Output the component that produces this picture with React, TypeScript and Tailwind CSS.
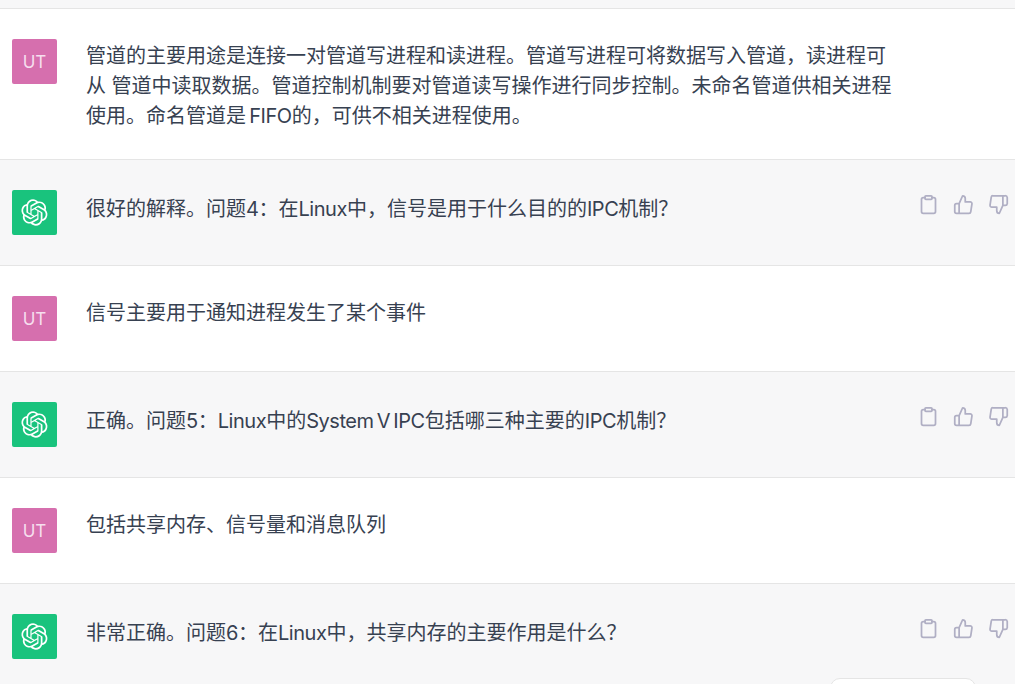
import React from 'react';

const FONT = '"Inter", "Noto Sans CJK SC", sans-serif';

const messages = [
  { id: 1, user: true, text: '管道的主要用途是连接一对管道写进程和读进程。管道写进程可将数据写入管道，读进程可从 管道中读取数据。管道控制机制要对管道读写操作进行同步控制。未命名管道供相关进程使用。命名管道是 FIFO的，可供不相关进程使用。' },
  { id: 2, user: false, text: '很好的解释。问题4：在Linux中，信号是用于什么目的的IPC机制？' },
  { id: 3, user: true, text: '信号主要用于通知进程发生了某个事件' },
  { id: 4, user: false, text: '正确。问题5：Linux中的System V IPC包括哪三种主要的IPC机制？' },
  { id: 5, user: true, text: '包括共享内存、信号量和消息队列' },
  { id: 6, user: false, text: '非常正确。问题6：在Linux中，共享内存的主要作用是什么？' },
];

// latin runs are set a bit tighter than Inter's default, the CJK stays on its 20px grid
const MessageText = ({ text }: { text: string }) => (
  <>
    {text.split(/([A-Za-z0-9 ]*[A-Za-z0-9][A-Za-z0-9 ]*)/).map((part, i) =>
      i % 2 === 1 ? <span key={i} className="tracking-[-0.45px] [word-spacing:-2px]">{part}</span> : part
    )}
  </>
);

const GptLogo = () => (
  <svg viewBox="0 0 41 41" className="w-[27px] h-[27px]" fill="white">
    <path d="M37.5324 16.8707C37.9808 15.5241 38.1363 14.0974 37.9886 12.6859C37.8409 11.2744 37.3934 9.91076 36.676 8.68622C35.6126 6.83404 33.9882 5.3676 32.0373 4.4985C30.0864 3.62941 27.9098 3.40259 25.8215 3.85078C24.8796 2.7893 23.7219 1.94125 22.4257 1.36341C21.1295 0.785575 19.7249 0.491269 18.3058 0.500197C16.1708 0.495044 14.0893 1.16803 12.3614 2.42214C10.6335 3.67624 9.34853 5.44666 8.6917 7.47815C7.30085 7.76286 5.98686 8.3414 4.8377 9.17505C3.68854 10.0087 2.73073 11.0782 2.02839 12.312C0.956464 14.1591 0.498905 16.2988 0.721698 18.4228C0.944492 20.5467 1.83612 22.5449 3.268 24.1293C2.81966 25.4759 2.66413 26.9026 2.81182 28.3141C2.95951 29.7256 3.40701 31.0892 4.12437 32.3138C5.18791 34.1659 6.8123 35.6322 8.76321 36.5013C10.7141 37.3704 12.8907 37.5973 14.9789 37.1492C15.9208 38.2107 17.0786 39.0587 18.3747 39.6366C19.6709 40.2144 21.0755 40.5087 22.4946 40.4998C24.6307 40.5054 26.7133 39.8321 28.4418 38.5772C30.1704 37.3223 31.4556 35.5506 32.1119 33.5179C33.5027 33.2332 34.8167 32.6547 35.9659 31.821C37.115 30.9874 38.0728 29.9178 38.7752 28.684C39.8458 26.8371 40.3023 24.6979 40.0789 22.5748C39.8556 20.4517 38.9639 18.4544 37.5324 16.8707ZM22.4978 37.8849C20.7443 37.8874 19.0459 37.2733 17.6994 36.1501C17.7601 36.117 17.8666 36.0586 17.936 36.0161L25.9004 31.4156C26.1003 31.3019 26.2663 31.137 26.3813 30.9378C26.4964 30.7386 26.5563 30.5124 26.5549 30.2825V19.0542L29.9213 20.998C29.9389 21.0068 29.9541 21.0198 29.9656 21.0359C29.977 21.052 29.9842 21.0707 29.9867 21.0902V30.3889C29.9842 32.375 29.1946 34.2791 27.7909 35.6841C26.3872 37.0892 24.4838 37.8806 22.4978 37.8849ZM6.39227 31.0064C5.51397 29.4888 5.19742 27.7107 5.49804 25.9832C5.55718 26.0187 5.66048 26.0818 5.73461 26.1244L13.699 30.7248C13.8975 30.8408 14.1233 30.902 14.3532 30.902C14.583 30.902 14.8088 30.8408 15.0073 30.7248L24.731 25.1103V28.9979C24.7321 29.0177 24.7283 29.0376 24.7199 29.0556C24.7115 29.0736 24.6988 29.0893 24.6829 29.1012L16.6317 33.7497C14.9096 34.7416 12.8643 35.0097 10.9447 34.4954C9.02506 33.9811 7.38785 32.7263 6.39227 31.0064ZM4.29707 13.6194C5.17156 12.0998 6.55279 10.9364 8.19885 10.3327C8.19885 10.4013 8.19491 10.5228 8.19491 10.6071V19.808C8.19351 20.0378 8.25334 20.2638 8.36823 20.4629C8.48312 20.6619 8.64893 20.8267 8.84863 20.9404L18.5723 26.5542L15.206 28.4979C15.1894 28.5089 15.1703 28.5155 15.1505 28.5173C15.1307 28.5191 15.1107 28.516 15.0924 28.5082L7.04046 23.8557C5.32135 22.8601 4.06716 21.2235 3.55289 19.3046C3.03862 17.3858 3.30624 15.3413 4.29707 13.6194ZM31.955 20.0556L22.2312 14.4411L25.5976 12.4981C25.6142 12.4872 25.6333 12.4805 25.6531 12.4787C25.6729 12.4769 25.6928 12.4801 25.7111 12.4879L33.7631 17.1364C34.9967 17.849 36.0017 18.8982 36.6606 20.1613C37.3194 21.4244 37.6047 22.849 37.4832 24.2684C37.3617 25.6878 36.8382 27.0432 35.9743 28.1759C35.1103 29.3086 33.9415 30.1717 32.6047 30.6641C32.6047 30.5947 32.6047 30.4733 32.6047 30.3889V21.188C32.6066 20.9586 32.5474 20.7328 32.4332 20.5338C32.319 20.3348 32.154 20.1698 31.955 20.0556ZM35.3055 15.0128C35.2464 14.9765 35.1431 14.9142 35.069 14.8717L27.1045 10.2712C26.906 10.1554 26.6803 10.0943 26.4504 10.0943C26.2206 10.0943 25.9948 10.1554 25.7963 10.2712L16.0726 15.8858V11.9982C16.0715 11.9783 16.0753 11.9585 16.0837 11.9405C16.0921 11.9225 16.1048 11.9068 16.1207 11.8949L24.1719 7.25025C25.4053 6.53903 26.8158 6.19376 28.2383 6.25482C29.6608 6.31589 31.0364 6.78077 32.2044 7.59508C33.3723 8.40939 34.2842 9.53945 34.8334 10.8531C35.3826 12.1667 35.5464 13.6095 35.3055 15.0128ZM14.2424 21.9419L10.8752 19.9981C10.8576 19.9893 10.8423 19.9763 10.8309 19.9602C10.8195 19.9441 10.8122 19.9254 10.8098 19.9058V10.6071C10.8107 9.18295 11.2173 7.78848 11.9819 6.58696C12.7466 5.38544 13.8377 4.42659 15.1275 3.82264C16.4173 3.21869 17.8524 2.99464 19.2649 3.1767C20.6775 3.35876 22.0089 3.93941 23.1034 4.85067C23.0427 4.88379 22.937 4.94215 22.8668 4.98473L14.9024 9.58517C14.7025 9.69878 14.5366 9.86356 14.4215 10.0626C14.3065 10.2616 14.2466 10.4877 14.2479 10.7175L14.2424 21.9419ZM16.071 17.9991L20.4018 15.4978L24.7325 17.9975V22.9985L20.4018 25.4983L16.071 22.9985V17.9991Z" />
  </svg>
);

const iconClass = 'w-[21px] h-[21px] fill-none stroke-[#b0afc4] stroke-2';

const ClipboardIcon = () => (
  <svg viewBox="0 0 24 24" className={iconClass} strokeLinecap="round" strokeLinejoin="round">
    <path d="M16 4h2a2 2 0 0 1 2 2v14a2 2 0 0 1-2 2H6a2 2 0 0 1-2-2V6a2 2 0 0 1 2-2h2" />
    <rect x="8" y="2" width="8" height="4" rx="1" ry="1" />
  </svg>
);

const ThumbUpIcon = () => (
  <svg viewBox="0 0 24 24" className={iconClass} strokeLinecap="round" strokeLinejoin="round">
    <path d="M14 9V5a3 3 0 0 0-3-3l-4 9v11h11.28a2 2 0 0 0 2-1.7l1.38-9a2 2 0 0 0-2-2.3zM7 22H4a2 2 0 0 1-2-2v-7a2 2 0 0 1 2-2h3" />
  </svg>
);

const ThumbDownIcon = () => (
  <svg viewBox="0 0 24 24" className={iconClass} strokeLinecap="round" strokeLinejoin="round">
    <path d="M10 15v4a3 3 0 0 0 3 3l4-9V2H5.72a2 2 0 0 0-2 1.7l-1.38 9a2 2 0 0 0 2 2.3zm7-13h2.67A2.31 2.31 0 0 1 22 4v7a2.31 2.31 0 0 1-2.33 2H17" />
  </svg>
);

export default function App() {
  return (
    <div className="relative h-[684px] w-[1015px] overflow-hidden bg-white text-[20px] leading-[30px] text-[#374151]" style={{ fontFamily: FONT }}>
      <div className="h-[9px] border-b border-[#e5e5e5] bg-[#f7f7f8]" />
      {messages.map(m => (
        <div key={m.id} className={`flex border-b border-[#e5e5e5] py-[30px] pl-3 ${m.user ? 'bg-white' : 'bg-[#f7f7f8]'}`}>
          {m.user ? (
            <div className="flex h-[45px] w-[45px] shrink-0 items-center justify-center rounded-[2px] bg-[#d66fae] text-[17px] text-[#f6dfee]">UT</div>
          ) : (
            <div className="flex h-[45px] w-[45px] shrink-0 items-center justify-center rounded-[2px] bg-[#19c37d]"><GptLogo /></div>
          )}
          <div className={`ml-[29px] w-[812px] shrink-0 ${m.user ? '-mb-[2px] pt-[2px]' : '-mb-[4px] pt-[4px]'}`}>
            <MessageText text={m.text} />
          </div>
          {!m.user && (
            <div className="ml-[20px] flex h-[21px] gap-[14px] pt-[4px]">
              <ClipboardIcon />
              <ThumbUpIcon />
              <ThumbDownIcon />
            </div>
          )}
        </div>
      ))}
      <div className="absolute left-[830px] top-[678px] h-10 w-[146px] rounded-[10px] border border-[#e5e5e5] bg-white" />
    </div>
  );
}
